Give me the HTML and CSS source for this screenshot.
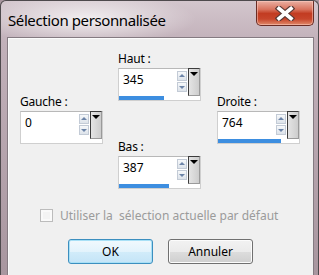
FILE: index.html
```html
<!DOCTYPE html>
<html lang="fr">
<head>
    <meta charset="UTF-8">
    <title>Sélection personnalisée</title>
    <link rel="stylesheet" href="styles.css">
</head>
<body>
    <div class="window">
        <div class="titlebar">
            <span class="title">Sélection personnalisée</span>
            <button class="close" aria-label="Fermer">
                <svg width="20" height="15" viewBox="0 0 20 15">
                    <path d="M4 2.5 L16 12.5 M16 2.5 L4 12.5" stroke="#5a3a36" stroke-width="6" stroke-linecap="square"/>
                    <path d="M4 2.5 L16 12.5 M16 2.5 L4 12.5" stroke="#fff" stroke-width="3.6" stroke-linecap="square"/>
                </svg>
            </button>
        </div>
        <div class="client">
            <div class="fields">
                <div class="col col-side">
                    <div class="group">
                        <label>Gauche :</label>
                        <div class="field">
                            <div class="field-top">
                                <span class="value">0</span>
                                <span class="spin"><span class="spin-up"></span><span class="spin-down"></span></span>
                                <span class="drop"></span>
                            </div>
                            <div class="bar"><div class="bar-fill" style="width:0px"></div></div>
                        </div>
                    </div>
                </div>
                <div class="col col-mid">
                    <div class="group">
                        <label>Haut :</label>
                        <div class="field">
                            <div class="field-top">
                                <span class="value">345</span>
                                <span class="spin"><span class="spin-up"></span><span class="spin-down"></span></span>
                                <span class="drop"></span>
                            </div>
                            <div class="bar"><div class="bar-fill" style="width:45px"></div></div>
                        </div>
                    </div>
                    <div class="group group-low">
                        <label>Bas :</label>
                        <div class="field">
                            <div class="field-top">
                                <span class="value">387</span>
                                <span class="spin"><span class="spin-up"></span><span class="spin-down"></span></span>
                                <span class="drop"></span>
                            </div>
                            <div class="bar"><div class="bar-fill" style="width:50px"></div></div>
                        </div>
                    </div>
                </div>
                <div class="col col-side">
                    <div class="group">
                        <label>Droite :</label>
                        <div class="field">
                            <div class="field-top">
                                <span class="value">764</span>
                                <span class="spin"><span class="spin-up"></span><span class="spin-down"></span></span>
                                <span class="drop"></span>
                            </div>
                            <div class="bar"><div class="bar-fill" style="width:63px"></div></div>
                        </div>
                    </div>
                </div>
            </div>
            <div class="option">
                <span class="check"></span>
                <span class="option-text">Utiliser la&nbsp; sélection actuelle par défaut</span>
            </div>
            <div class="buttons">
                <button class="btn btn-default">OK</button>
                <button class="btn">Annuler</button>
            </div>
        </div>
    </div>
</body>
</html>
```

FILE: styles.css
```css
body {
    margin: 0;
    font-family: "Noto Sans", "Open Sans", sans-serif;
    font-size: 12px;
    color: #000;
    background: #a8969f;
}
.window {
    width: 319px;
    height: 275px;
    box-sizing: border-box;
    border: 1px solid #4e4a4d;
    border-bottom: none;
    border-radius: 6px 6px 0 0;
    padding: 0 4px 0 6px;
    background:
        radial-gradient(ellipse 110px 26px at 85px 18px, rgba(255, 255, 255, 0.75), rgba(255, 255, 255, 0) 100%),
        linear-gradient(to bottom, #d3c6cd 0, #c2b1ba 40px, #a8969f 100%);
    overflow: hidden;
}
.titlebar {
    display: flex;
    align-items: flex-start;
    height: 36px;
}
.title {
    margin: 9px 0 0 1px;
    font-size: 15px;
    line-height: 20px;
    letter-spacing: -0.4px;
    color: #000;
}
.close {
    margin-left: auto;
    width: 58px;
    height: 25px;
    padding: 0;
    border: 1px solid #6a2c24;
    border-top: none;
    border-radius: 0 0 5px 5px;
    background: linear-gradient(to bottom, #eab0a3 0, #d9735e 35%, #c23c22 52%, #c7452b 75%, #e08a6a 100%);
    box-shadow: inset 0 0 0 1px rgba(255, 210, 200, 0.5);
    display: flex;
    align-items: center;
    justify-content: center;
}
.client {
    height: 240px;
    box-sizing: border-box;
    border: 1px solid #847a81;
    border-bottom: none;
    background: #f0f0f0;
    box-shadow: inset 1px 1px 0 #fbfbfb;
    padding: 13px 0 0 12px;
}
.fields {
    display: grid;
    grid-template-columns: 98px 99px 83px;
    height: 138px;
}
.col-side {
    padding-top: 43px;
}
.group label {
    display: block;
    line-height: 15px;
    margin-bottom: 2px;
    letter-spacing: -0.2px;
}
.group-low {
    margin-top: 38px;
}
.field {
    width: 83px;
    height: 33px;
    box-sizing: border-box;
    border: 1px solid #cfcfcf;
    border-top-color: #b8b8b8;
    background: #fff;
    padding-bottom: 1px;
}
.field-top {
    display: flex;
    height: 27px;
}
.value {
    flex: 1;
    padding: 3px 0 0 4px;
    line-height: 15px;
}
.spin {
    width: 10px;
    display: flex;
    flex-direction: column;
    gap: 1px;
    padding-top: 2px;
    margin-right: 1px;
}
.spin-up, .spin-down {
    height: 10px;
    box-sizing: border-box;
    border: 1px solid #c3cbd6;
    background: linear-gradient(to bottom, #f6f8fa, #dde3ea);
    position: relative;
}
.spin-up::after, .spin-down::after {
    content: "";
    position: absolute;
    left: 1px;
    border-left: 3px solid transparent;
    border-right: 3px solid transparent;
}
.spin-up::after {
    top: 2px;
    border-bottom: 3px solid #6c84a8;
}
.spin-down::after {
    top: 3px;
    border-top: 3px solid #6c84a8;
}
.drop {
    width: 12px;
    height: 28px;
    margin-top: -1px;
    box-sizing: border-box;
    border: 1px solid #3c3c3c;
    border-right-color: #9a9a9a;
    border-bottom-color: #9a9a9a;
    background: linear-gradient(to right, #e4e4e4, #cdcdcd);
    position: relative;
}
.drop::after {
    content: "";
    position: absolute;
    top: 3px;
    left: 1px;
    border-left: 4px solid transparent;
    border-right: 4px solid transparent;
    border-top: 4px solid #000;
}
.bar {
    height: 4px;
}
.bar-fill {
    height: 100%;
    background: #3d8ee0;
}
.option {
    display: flex;
    align-items: center;
    gap: 7px;
    margin: 19px 0 0 20px;
    height: 15px;
}
.check {
    width: 13px;
    height: 13px;
    box-sizing: border-box;
    border: 1px solid #bcbcbc;
    background: #f4f4f4;
    box-shadow: inset 0 0 0 2px #fafafa;
}
.option-text {
    color: #9b9b9b;
    line-height: 15px;
}
.buttons {
    display: flex;
    justify-content: center;
    gap: 15px;
    margin: 16px 0 0 -12px;
}
.btn {
    width: 85px;
    height: 25px;
    padding: 0;
    font-family: inherit;
    font-size: 12px;
    color: #000;
    border: 1px solid #707070;
    border-radius: 3px;
    background: linear-gradient(to bottom, #f2f2f2 0, #ebebeb 50%, #dddddd 50%, #cfcfcf 100%);
    box-shadow: inset 0 0 0 1px #fcfcfc;
}
.btn-default {
    border-color: #3c8fbf;
    background: linear-gradient(to bottom, #f1f9fd 0, #e3f3fc 50%, #d2ecfa 50%, #c4e4f7 100%);
    box-shadow: inset 0 0 0 1px #a8e0f6;
}
```
